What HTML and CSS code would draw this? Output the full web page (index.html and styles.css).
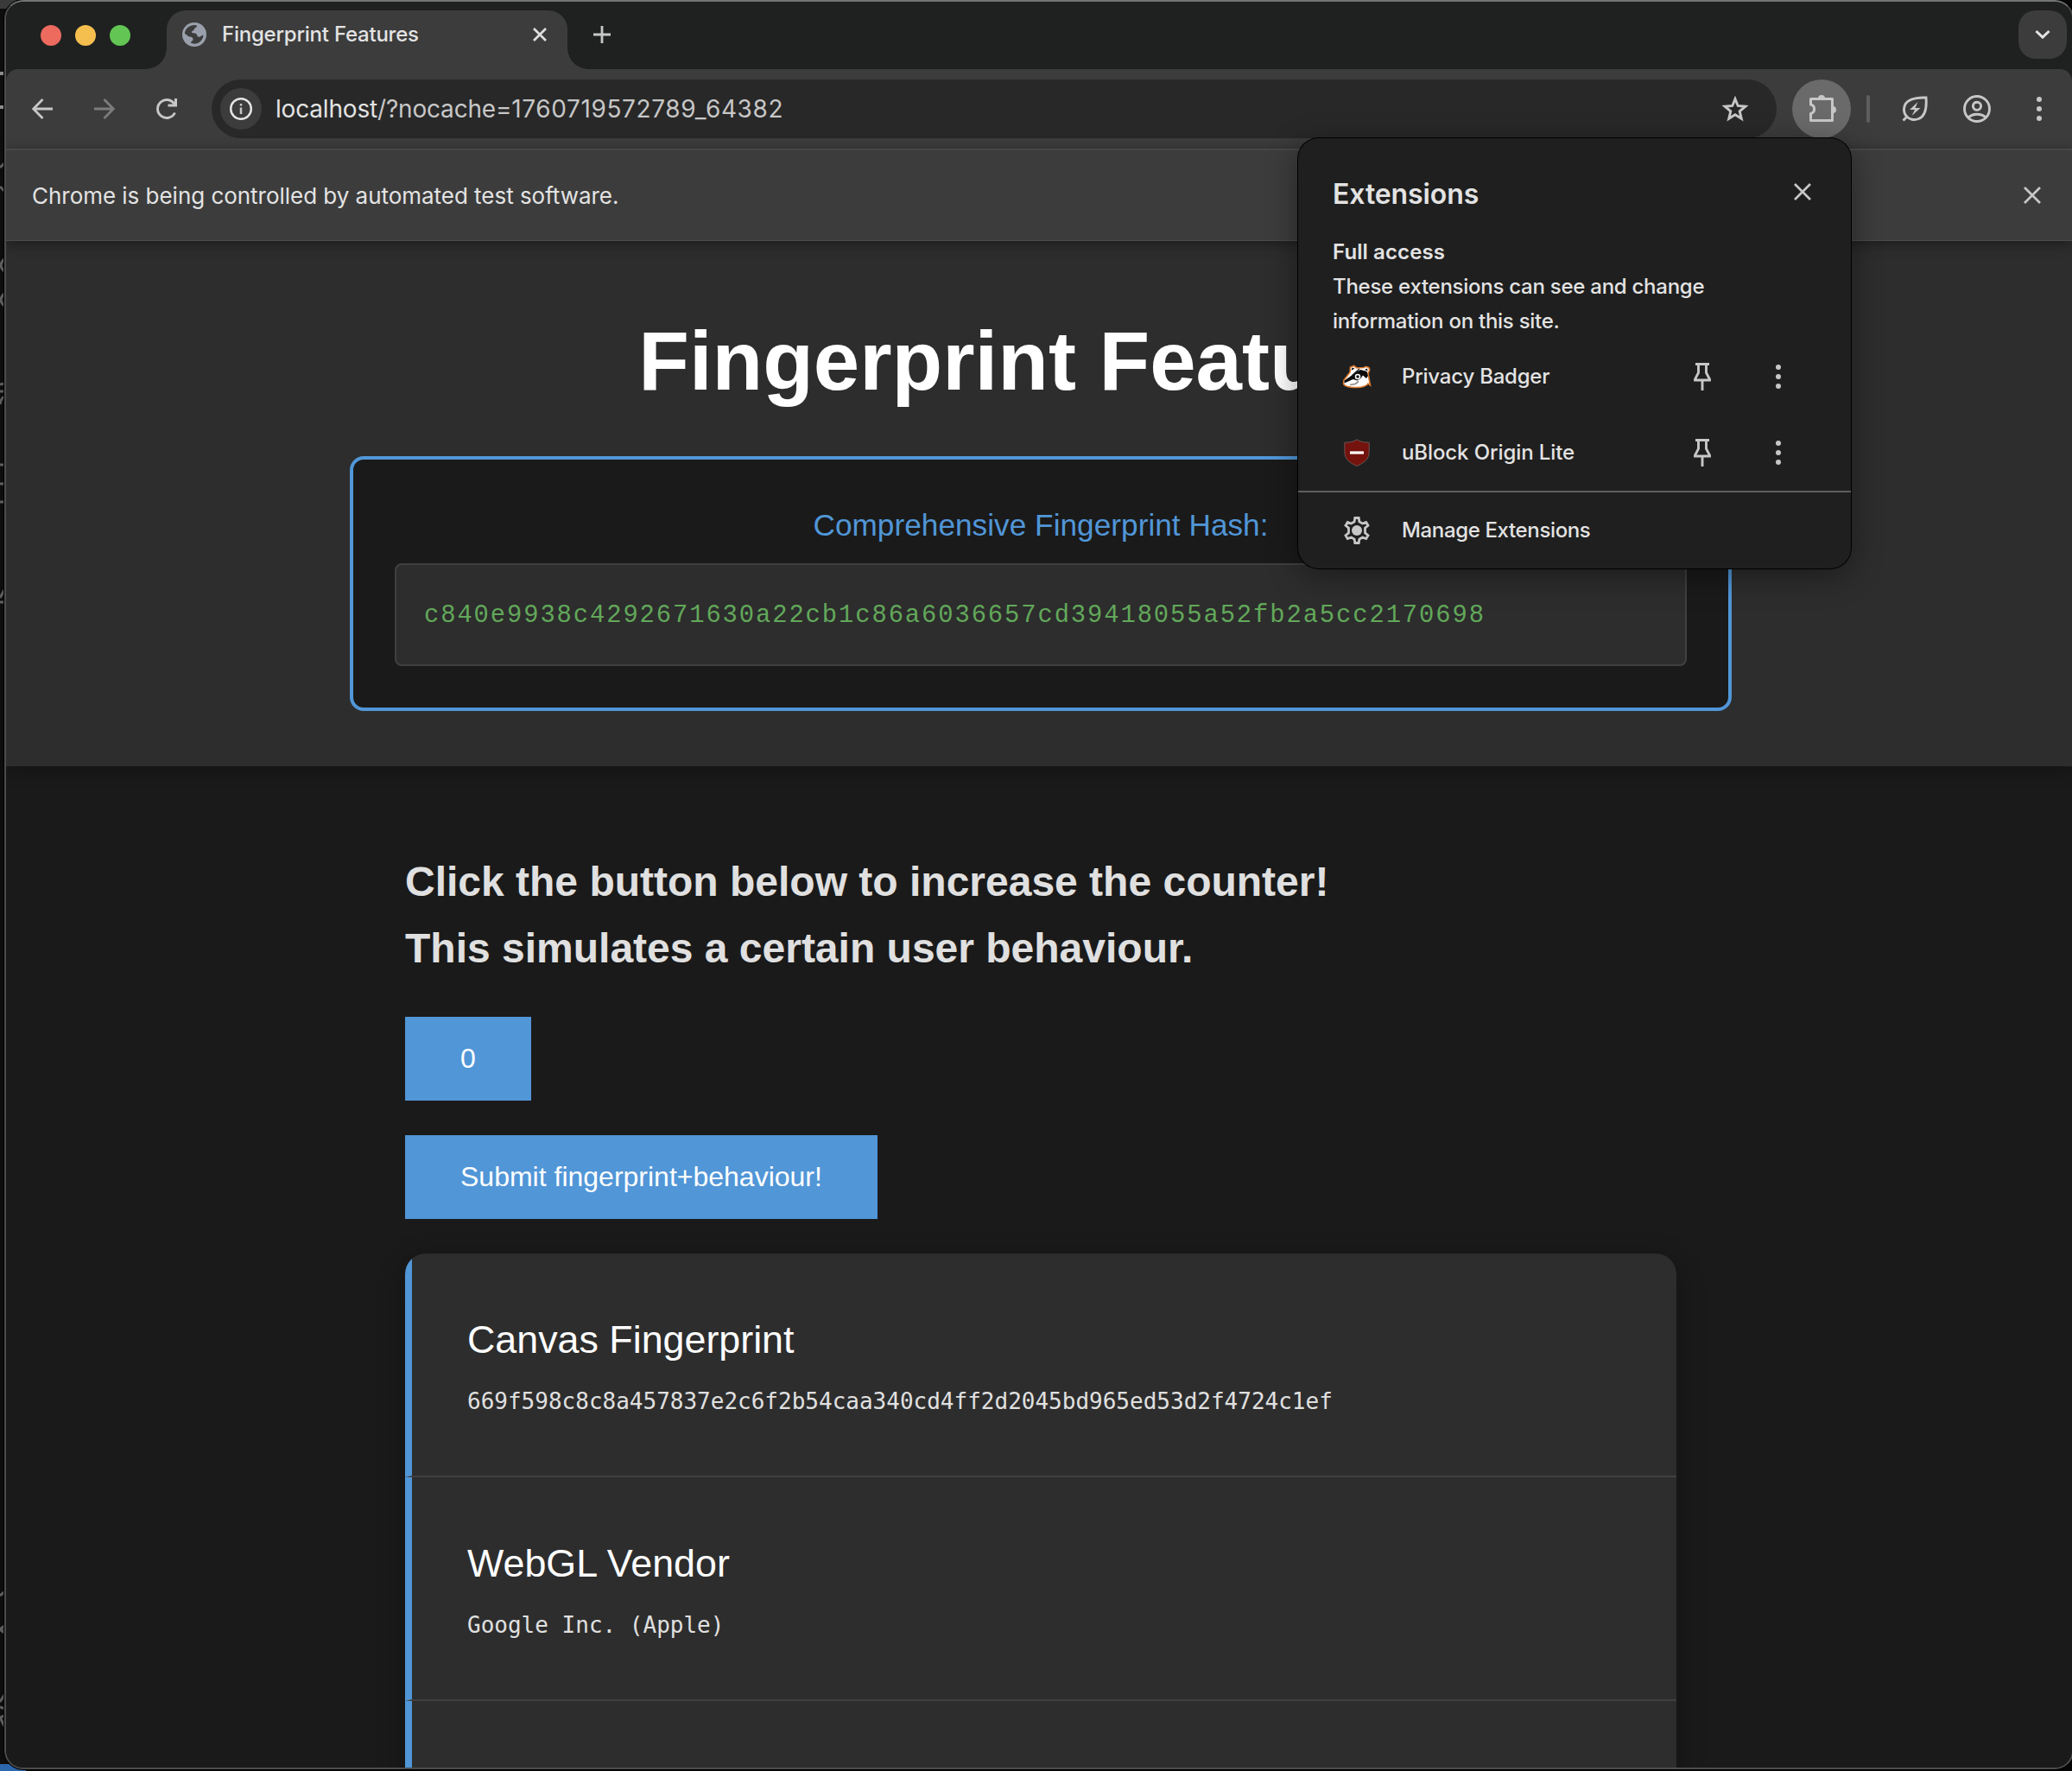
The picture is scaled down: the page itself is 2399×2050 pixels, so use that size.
FILE: index.html
```html
<!DOCTYPE html>
<html lang="en">
<head>
<meta charset="utf-8">
<title>Fingerprint Features</title>
<link rel="stylesheet" href="styles.css">
</head>
<body>
<svg class="backdrop" width="30" height="2050" viewBox="0 0 30 2050" aria-hidden="true">
  <rect width="30" height="2050" fill="#0d0d0d"/>
  <rect width="20" height="10" fill="#3a3a3a"/>
  <path d="M0 83h5v4H0zM0 122h5v4H0z" fill="#8c8c8c"/>
  <g fill="none" stroke="#5e5e5e" stroke-width="3">
    <path d="M0 194l5-5M0 216l5 5M5 300q-8 7 0 14M5 340q-8 7 0 14M0 445l5-1M0 453h5M0 468q1-7 5-9M0 538h5M0 560h5M0 581h5M0 692l5-9M0 697h5M0 1847l6-5M0 1886l5-4v8zM0 1970l5-8M0 1976l6 2M5 1986l-5 2 5 10"/>
  </g>
  <rect y="2042" width="30" height="8" fill="#2c66ad"/>
</svg>
<div class="window">
  <header class="tabstrip">
    <div class="lights"><i class="light red"></i><i class="light yellow"></i><i class="light green"></i></div>
    <div class="tab">
      <svg class="globe" width="28" height="28" viewBox="0 0 28 28"><circle cx="14" cy="14" r="14" fill="#9aa0ab"/><path d="M11 3.500c2-.8 4.500-.8 6 0 .3 2-1.500 2.200-2.500 3.200s-.5 2.300-2.500 3c-1.500.5-1.500 1.800-.5 2.300 1.500.6 4 .2 5 1.500s.5 3 2.500 3.200c2.200.2 3-1.700 5.500-2.200-.3 6-5 10.200-10.500 10.200-1.500-.2-3-.5-4-1 .2-2.500 2.500-2 2.500-4.200s-1.500-2.800-4-3c-2 0-3.500-2.500-5.700-3.700C3.500 8 6.500 4.800 11 3.500z" fill="#3c3c3c"/></svg>
      <span class="tab-title">Fingerprint Features</span>
      <svg class="tab-close" width="18" height="18" viewBox="0 0 18 18"><path d="M2 2l14 14M16 2L2 16" stroke="#dedede" stroke-width="2.800"/></svg>
    </div>
    <svg class="plus" width="22" height="22" viewBox="0 0 22 22"><path d="M11 1v20M1 11h20" stroke="#c7c7c7" stroke-width="2.800"/></svg>
    <div class="tabsearch"><svg width="18" height="12" viewBox="0 0 18 12"><path d="M1.500 2L9 9.200 16.500 2" fill="none" stroke="#e3e3e3" stroke-width="3"/></svg></div>
  </header>
  <nav class="toolbar">
    <svg width="24" height="24" viewBox="0 0 24 24"><path d="M24 12H2M12.500 1L1.700 12l10.800 11" fill="none" stroke="#c7c7c7" stroke-width="2.800"/></svg>
    <svg width="24" height="24" viewBox="0 0 24 24"><path d="M0 12h22M11.500 1l10.800 11-10.800 11" fill="none" stroke="#7c7c7c" stroke-width="2.800"/></svg>
    <svg class="reload" width="26" height="26" viewBox="0 0 26 26"><path d="M22.500 17.500A10.500 10.500 0 1 1 22.500 8.500" fill="none" stroke="#c7c7c7" stroke-width="2.900"/><path d="M14.500 10.500H25V1h-3v6.500h-7.500z" fill="#c7c7c7"/></svg>
    <div class="omnibox">
      <span class="siteinfo"><svg width="28" height="28" viewBox="0 0 28 28"><circle cx="14" cy="14" r="11.800" fill="none" stroke="#e3e3e3" stroke-width="2.500"/><path d="M14 12.500v7.500M14 8v2.600" stroke="#c7c7c7" stroke-width="2.500"/></svg></span>
      <span class="url"><b>localhost</b>/?nocache=<span class="digits">1760719572789_64382</span></span>
      <svg class="star" width="32" height="30" viewBox="0 0 32 30"><path d="M16 3.500l3.200 8 8.700.7-6.700 5.600 2.100 8.500-7.300-4.600-7.300 4.600 2.100-8.500-6.700-5.600 8.700-.7z" fill="none" stroke="#c7c7c7" stroke-width="2.900"/></svg>
    </div>
    <div class="puzzle"><svg width="34" height="34" viewBox="0 0 34 34"><path d="M4.500 5.500V12c5.500 1.500 5.500 9 0 10.500v8h25v-25z" fill="none" stroke="#c7c7c7" stroke-width="3" stroke-linejoin="round"/><path d="M13 5a4 4 0 0 1 8 0zM30 14a4 4 0 0 1 0 8z" fill="#c7c7c7"/></svg></div>
    <i class="sep"></i>
    <svg class="leaf" width="32" height="32" viewBox="0 0 32 32"><path d="M29 3C16 2.500 4 5.500 3.500 16c-.2 3 .5 6 3 8.500 3 4 9 5 14 3C28 24.500 30 15 29 3zM2.500 29.500l5-5" fill="none" stroke="#c7c7c7" stroke-width="2.900"/><path d="M19.500 8L10 17h6l-3.500 7 10-9h-6z" fill="#c7c7c7"/></svg>
    <svg class="profile" width="32" height="32" viewBox="0 0 32 32"><g fill="none" stroke="#c7c7c7" stroke-width="2.900"><circle cx="16" cy="16" r="14.500"/><circle cx="16" cy="12.800" r="4.600"/><path d="M6 26c5-5 15-5 20 0"/></g></svg>
    <svg class="dots" width="8" height="28" viewBox="0 0 8 28"><g fill="#c7c7c7"><circle cx="4" cy="3" r="3"/><circle cx="4" cy="14" r="3"/><circle cx="4" cy="25" r="3"/></g></svg>
  </nav>
  <div class="infobar">
    <span>Chrome is being controlled by automated test software.</span>
    <svg width="20" height="20" viewBox="0 0 20 20"><path d="M1 1l18 18M19 1L1 19" stroke="#c7c7c7" stroke-width="2.700"/></svg>
  </div>
  <main class="page">
    <section class="hero">
      <h1>Fingerprint Features</h1>
      <div class="hashbox">
        <p class="hash-title">Comprehensive Fingerprint Hash:</p>
        <div class="hash">c840e9938c4292671630a22cb1c86a6036657cd39418055a52fb2a5cc2170698</div>
      </div>
    </section>
    <section class="content">
      <h2>Click the button below to increase the counter!<br>This simulates a certain user behaviour.</h2>
      <button class="btn">0</button>
      <button class="btn">Submit fingerprint+behaviour!</button>
      <div class="cards">
        <article class="card"><h3>Canvas Fingerprint</h3><code>669f598c8c8a457837e2c6f2b54caa340cd4ff2d2045bd965ed53d2f4724c1ef</code></article>
        <article class="card"><h3>WebGL Vendor</h3><code>Google Inc. (Apple)</code></article>
        <article class="card"></article>
      </div>
    </section>
  </main>
</div>
<aside class="popup">
  <div class="popup-head"><h4>Extensions</h4><svg width="20" height="20" viewBox="0 0 20 20"><path d="M1 1l18 18M19 1L1 19" stroke="#c7c7c7" stroke-width="2.700"/></svg></div>
  <div class="access"><strong>Full access</strong><p>These extensions can see and change<br>information on this site.</p></div>
  <div class="ext">
    <svg width="36" height="32" viewBox="0 0 36 32"><path d="M3 20L10 11l.5-6 4-1.500L18 6l8-.5C29 3.500 33.500 5 32.500 9L31 12l1 6 1.500 8-2.500-2c-1 2.500-7 4.500-13 4.500C10 28.500 2.500 27 2.500 23.500z" fill="#fff" stroke="#d9772b" stroke-width="1.600"/><path d="M3.500 20.500L10 16l7-5.500 5.500-2.500 7 2 1.500 5-2 3-4-3.500-3 4-3.500 2-5-1.500-6.500 3-3.500 1.500z" fill="#0c0c0c"/><path d="M11.500 9l1-3.500 3 1zM27 8l3-1.500.5 3z" fill="#111"/><path d="M13 14l8-7" stroke="#222" stroke-width="1.300"/><circle cx="19" cy="16" r="2.500" fill="#111" stroke="#fff" stroke-width="1.500"/><path d="M10 25.500l6-1 4-3" fill="none" stroke="#8a8a8a" stroke-width="1.600"/></svg>
    <span class="name-badger">Privacy Badger</span>
    <svg class="pin" width="20" height="32" viewBox="0 0 20 32"><path d="M2 1.500h16M5.500 2v9.500L1.500 19v1h17v-1l-4-7.500V2M10 20v12" fill="none" stroke="#c7c7c7" stroke-width="2.900"/></svg>
    <svg class="more" width="8" height="28" viewBox="0 0 8 28"><g fill="#c7c7c7"><circle cx="4" cy="3" r="3"/><circle cx="4" cy="14" r="3"/><circle cx="4" cy="25" r="3"/></g></svg>
  </div>
  <div class="ext">
    <svg width="36" height="32" viewBox="0 0 36 32"><path d="M18 .7c4 3 9 3.500 14.200 3.500V15c0 9-6 12.500-14.200 16.500C9.800 27.500 3.800 24 3.800 15V4.200C9 4.200 14 3.700 18 .7z" fill="#74120d" stroke="#6a5554"/><path d="M10 16h16" stroke="#fff" stroke-width="3.200"/></svg>
    <span class="name-ublock">uBlock Origin Lite</span>
    <svg class="pin" width="20" height="32" viewBox="0 0 20 32"><path d="M2 1.500h16M5.500 2v9.500L1.500 19v1h17v-1l-4-7.500V2M10 20v12" fill="none" stroke="#c7c7c7" stroke-width="2.900"/></svg>
    <svg class="more" width="8" height="28" viewBox="0 0 8 28"><g fill="#c7c7c7"><circle cx="4" cy="3" r="3"/><circle cx="4" cy="14" r="3"/><circle cx="4" cy="25" r="3"/></g></svg>
  </div>
  <div class="ext manage">
    <svg width="36" height="32" viewBox="0 0 36 32"><path d="M15.800 1.500h4.400l.7 4.400 3.600 2.100 4.200-1.600 2.300 3.900-3.500 2.900v5.600l3.500 2.900-2.300 3.900-4.200-1.600-3.600 2.100-.7 4.400h-4.400l-.7-4.400-3.600-2.100-4.200 1.600L5 21.700l3.500-2.900v-5.600L5 10.300l2.300-3.900L11.500 8l3.600-2.100z" fill="none" stroke="#c7c7c7" stroke-width="2.800"/><circle cx="18" cy="16" r="6" fill="#c7c7c7"/></svg>
    <span class="name-manage">Manage Extensions</span>
  </div>
</aside>
</body>
</html>
```
FILE: styles.css
```css
* { box-sizing: border-box; }
body { margin: 0; width: 2399px; height: 2050px; overflow: hidden; position: relative; background: #050505; font-family: Inter, "Liberation Sans", sans-serif; color: #e3e3e3; }
svg { display: block; flex: none; }
h1, h2, h3, h4, p { margin: 0; }
.backdrop { position: absolute; left: 0; top: 0; }
.window { position: relative; margin-left: 5px; width: 2396px; height: 2048px; border: 2px solid #4c4c4c; border-top-color: #727474; border-radius: 22px; overflow: hidden; background: #1f2020; display: flex; flex-direction: column; box-shadow: 0 0 0 1px #000; }

.tabstrip { height: 78px; background: #1f2120; display: flex; align-items: flex-start; padding-left: 40px; flex: none; }
.lights { display: flex; gap: 16px; padding-top: 27px; width: 146px; }
.light { width: 24px; height: 24px; border-radius: 50%; }
.red { background: #ed6a5f; }
.yellow { background: #f5bf4f; }
.green { background: #62c554; }
.tab { position: relative; width: 464px; height: 68px; margin-top: 10px; background: #3c3c3c; border-radius: 22px 22px 0 0; display: flex; align-items: center; padding: 0 23px 12px 18px; }
.tab::before, .tab::after { content: ""; position: absolute; bottom: 0; width: 24px; height: 24px; }
.tab::before { left: -24px; background: radial-gradient(circle at 0 0, transparent 23.5px, #3c3c3c 24px); }
.tab::after { right: -24px; background: radial-gradient(circle at 100% 0, transparent 23.5px, #3c3c3c 24px); }
.tab-title { margin-left: 18px; font-size: 24px; line-height: 30px; font-weight: 450; letter-spacing: -.23px; white-space: nowrap; }
.tab-close { margin-left: auto; }
.plus { margin: 27px 0 0 29px; }
.tabsearch { margin: 10px 6px 0 auto; width: 56px; height: 56px; border-radius: 20px; background: #3c3c3c; display: grid; place-items: center; }

.toolbar { height: 92px; flex: none; background: #3c3c3c; border-radius: 14px 14px 0 0; display: flex; align-items: center; padding-left: 30px; gap: 48px; }
.reload { margin: 0 1px 0 -1px; }
.omnibox { width: 1812px; height: 68px; border-radius: 34px; background: #282828; display: flex; align-items: center; padding: 0 32px 0 10px; margin-left: -10px; }
.siteinfo { width: 48px; height: 48px; border-radius: 50%; background: #3c3c3c; display: grid; place-items: center; }
.url { margin-left: 16px; font-size: 28px; letter-spacing: -.18px; color: #c7c7c7; white-space: nowrap; }
.url b { font-weight: 400; color: #e3e3e3; }
.digits { letter-spacing: .6px; }
.star { margin-left: auto; }
.puzzle { width: 68px; height: 68px; border-radius: 50%; background: #6a6a6a; display: grid; place-items: center; margin-left: -30px; }
.sep { width: 4px; height: 32px; border-radius: 2px; background: #5e5e5e; margin-left: -30px; }
.leaf { margin-left: -12px; }
.profile { margin-left: -8px; }
.dots { margin-left: 4px; }

.infobar { height: 107px; flex: none; background: #3c3c3c; border-top: 2px solid #474747; border-bottom: 1px solid #4a4a4a; display: flex; align-items: center; justify-content: space-between; padding: 0 36px 0 30px; font-size: 26px; letter-spacing: -.03px; white-space: nowrap; position: relative; z-index: 2; box-shadow: 0 3px 14px rgba(0,0,0,.4); }

.page { flex: 1; min-height: 0; padding-left: 4px; background: #1a1a1a; font-family: "Liberation Sans", sans-serif; line-height: 1.6; }
.hero { position: relative; height: 608px; margin-left: -4px; background: #2d2d2d; box-shadow: 0 4px 20px rgba(0,0,0,.3); display: flex; flex-direction: column; align-items: center; padding: 62px 0 0 4px; color: #fff; }
h1 { font-size: 96px; line-height: 153px; font-weight: 700; white-space: nowrap; padding-left: 2px; margin-bottom: 34px; }
.hashbox { width: 1600px; height: 295px; border: 4px solid #5196d7; border-radius: 16px; background: #1a1a1a; padding: 48px; }
.hash-title { text-align: center; font-size: 35.2px; letter-spacing: .03px; line-height: 56px; color: #5196d7; margin-bottom: 16px; }
.hash { height: 119px; border: 2px solid #404040; border-radius: 8px; background: #2d2d2d; padding: 33px 32px 31px; font: 28.8px/52px "Liberation Mono", monospace; letter-spacing: 1.92px; color: #62a85a; white-space: nowrap; }
.content { width: 1600px; margin: 0 auto; padding: 96px 64px 0; display: flex; flex-direction: column; align-items: flex-start; }
h2 { font-size: 48px; line-height: 76.8px; color: #e0e0e0; white-space: nowrap; margin-bottom: 40px; }
.btn { height: 97px; padding: 0 64px; border: 0; border-radius: 0; background: #5196d7; color: #fff; font: 32px "Liberation Sans", sans-serif; margin-bottom: 40px; }
.cards { width: 1472px; border-radius: 24px; overflow: hidden; background: #2d2d2d; box-shadow: 0 8px 32px rgba(0,0,0,.3); }
.card { height: 259px; border-left: 8px solid #5196d7; border-bottom: 2px solid #404040; padding: 63px 64px 0; }
h3 { font-size: 44.8px; line-height: 72px; font-weight: 400; color: #fff; }
code { display: block; font: 26px/42px "DejaVu Sans Mono", monospace; margin-top: 15px; color: #e0e0e0; }

.popup { position: absolute; z-index: 5; left: 1503px; top: 160px; width: 640px; height: 498px; border-radius: 24px; background: #1f1f1f; box-shadow: 0 0 0 1px #000, 0 8px 36px rgba(0,0,0,.4); font-size: 24px; font-weight: 450; }
.popup-head { display: flex; justify-content: space-between; padding: 42px 46px 0 40px; height: 112px; }
.popup-head svg { margin-top: 10px; }
h4 { font-size: 32px; line-height: 46px; font-weight: 560; letter-spacing: -.1px; }
.access { padding-left: 40px; line-height: 40px; height: 120px; white-space: nowrap; }
.access strong { display: block; font-weight: 600; letter-spacing: .1px; }
.access p { letter-spacing: -.26px; }
.ext { height: 88px; display: flex; align-items: center; padding-left: 50px; }
.ext span { margin-left: 34px; width: 338px; padding-bottom: 1px; white-space: nowrap; }
.name-badger { letter-spacing: -.22px; }
.name-ublock { letter-spacing: -.1px; }
.name-manage { letter-spacing: -.36px; }
.more { margin-left: 74px; }
.manage { border-top: 2px solid #5e5e5e; height: 90px; }
```
